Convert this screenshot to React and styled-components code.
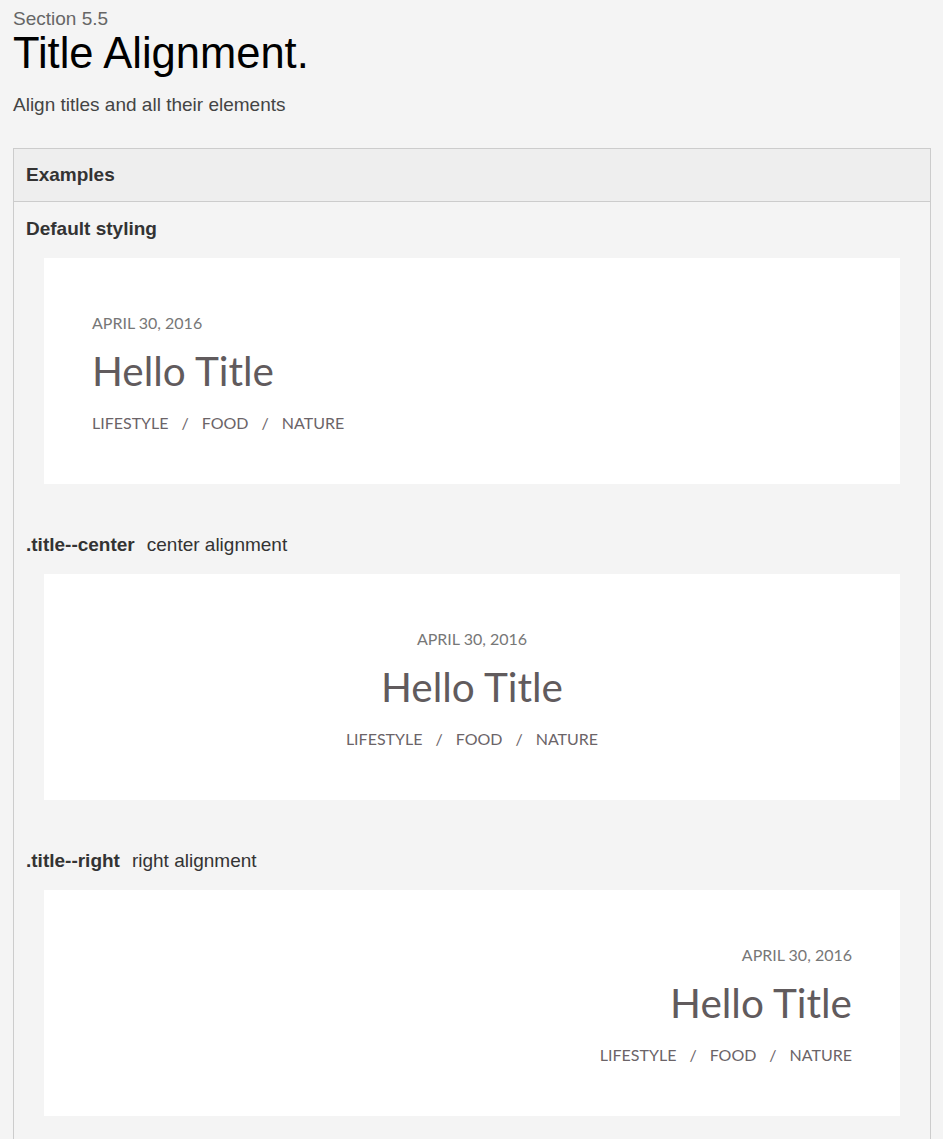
import React from "react";
import styled, { createGlobalStyle } from "styled-components";

const GlobalStyle = createGlobalStyle`
  html, body {
    margin: 0;
    padding: 0;
    background: #f4f4f4;
    font-family: "Liberation Sans", Arial, sans-serif;
  }
`;

const Page = styled.div`
  padding: 8px 12px 0 13px;
`;

const Kicker = styled.div`
  font-size: 19px;
  line-height: 22px;
  color: #666;
`;

const Heading = styled.h1`
  margin: 0;
  font-size: 43.5px;
  font-weight: normal;
  line-height: 46px;
  color: #000;
`;

const Lead = styled.p`
  margin: 18px 0 32px;
  font-size: 19px;
  line-height: 22px;
  color: #444;
`;

const Panel = styled.div`
  border: 1px solid #ccc;
  background: #f4f4f4;
`;

const PanelHead = styled.div`
  height: 52px;
  display: flex;
  align-items: center;
  padding: 0 12px;
  background: #eee;
  border-bottom: 1px solid #ccc;
  font-size: 19px;
  font-weight: bold;
  color: #333;
`;

const PanelBody = styled.div`
  padding: 16px 12px 40px;
`;

const Label = styled.div`
  font-size: 19px;
  line-height: 22px;
  color: #333;
  margin-top: ${(p) => (p.$first ? "0" : "50px")};
  b {
    margin-right: 12px;
  }
`;

const Card = styled.div`
  margin: 18px 18px 0;
  height: 226px;
  box-sizing: border-box;
  background: #fff;
  padding: 53px 48px 0;
  font-family: Lato, "Open Sans", sans-serif;
  text-align: ${(p) => p.$align || "left"};
`;

const Date = styled.div`
  font-size: 16px;
  line-height: 24px;
  text-transform: uppercase;
  color: #777;
`;

const Title = styled.div`
  margin: 12px 0 16px;
  font-size: 40.5px;
  line-height: 48px;
  color: #615b5d;
`;

const Cats = styled.div`
  font-size: 16px;
  line-height: 24px;
  color: #6b6468;
  span {
    margin: 0 13px;
  }
`;

const TitleBlock = ({ align }) => (
  <Card $align={align}>
    <Date>April 30, 2016</Date>
    <Title>Hello Title</Title>
    <Cats>
      LIFESTYLE<span>/</span>FOOD<span>/</span>NATURE
    </Cats>
  </Card>
);

const App = () => (
  <Page>
    <GlobalStyle />
    <Kicker>Section 5.5</Kicker>
    <Heading>Title Alignment.</Heading>
    <Lead>Align titles and all their elements</Lead>
    <Panel>
      <PanelHead>Examples</PanelHead>
      <PanelBody>
        <Label $first>
          <b>Default styling</b>
        </Label>
        <TitleBlock />
        <Label>
          <b>.title--center</b>center alignment
        </Label>
        <TitleBlock align="center" />
        <Label>
          <b>.title--right</b>right alignment
        </Label>
        <TitleBlock align="right" />
      </PanelBody>
    </Panel>
  </Page>
);

export default App;
